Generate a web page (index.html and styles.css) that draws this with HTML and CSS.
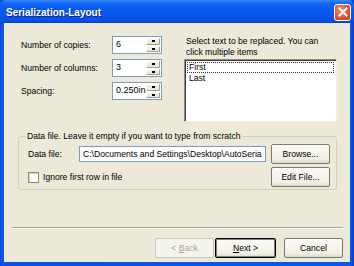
FILE: index.html
```html
<!DOCTYPE html>
<html>
<head>
	<title>Serialization-Layout</title>
	<link rel="stylesheet" href="styles.css">
</head>
<body>
	<div class="window">
		<!-- title bar -->
		<div class="titlebar">
			<span class="title">Serialization-Layout</span>
			<span class="close">
				<svg width="10" height="10" viewBox="0 0 10 10"><path d="M1.5 1.5 L8.5 8.5 M8.5 1.5 L1.5 8.5" stroke="#fff" stroke-width="2" stroke-linecap="square"/></svg>
			</span>
		</div>

		<div class="client">
			<div class="top">
				<div class="fields">
					<div class="row">
						<span class="label">Number of copies:</span>
						<div class="spin"><span class="val">6</span><span class="arrows"><i class="up"></i><i class="down"></i></span></div>
					</div>
					<div class="row">
						<span class="label">Number of columns:</span>
						<div class="spin"><span class="val">3</span><span class="arrows"><i class="up"></i><i class="down"></i></span></div>
					</div>
					<div class="row">
						<span class="label">Spacing:</span>
						<div class="spin"><span class="val">0.250in</span><span class="arrows"><i class="up"></i><i class="down"></i></span></div>
					</div>
				</div>
				<div class="pick">
					<p class="hint">Select text to be replaced. You can click multiple items</p>
					<div class="list">
						<div class="item focus">First</div>
						<div class="item">Last</div>
					</div>
				</div>
			</div>

			<!-- data file group -->
			<fieldset class="group">
				<legend>Data file. Leave it empty if you want to type from scratch</legend>
				<div class="grow">
					<span class="flabel">Data file:</span>
					<div class="path">C:\Documents and Settings\Desktop\AutoSeria</div>
					<button class="btn" type="button">Browse...</button>
				</div>
				<div class="grow">
					<span class="check"></span>
					<span class="clabel">Ignore first row in file</span>
					<button class="btn" type="button">Edit File...</button>
				</div>
			</fieldset>

			<div class="sep"></div>

			<div class="buttons">
				<button class="btn off" type="button">&lt; <u>B</u>ack</button>
				<button class="btn def" type="button"><u>N</u>ext &gt;</button>
				<button class="btn cancel" type="button">Cancel</button>
			</div>
		</div>
	</div>
</body>
</html>
```

FILE: styles.css
```css
*{
	margin: 0;
	padding: 0;
	box-sizing: border-box;
}
body{
	width: 354px;
	height: 266px;
	overflow: hidden;
	font-family: "Liberation Sans", Arial, sans-serif;
	font-size: 8.6px;
	color: #000;
	background: #0842d0;
}
.window{
	width: 354px;
	height: 266px;
	display: flex;
	flex-direction: column;
	background: linear-gradient(90deg, #0a48d8, #0a58f0 2px, #0a50e0 4px, #0a58f0 350px, #0a3cc4);
	padding: 0 4px 4px 4px;
}

/* title bar */
.titlebar{
	height: 23px;
	margin: 0 -4px;
	padding: 0 3px 0 6px;
	display: flex;
	align-items: center;
	justify-content: space-between;
	background: linear-gradient(#3a8cf8 0, #1468f4 3px, #0a5cf0 8px, #0656ea 16px, #0a50e0 21px, #0a3cc0 23px);
	border-radius: 6px 6px 0 0;
}
.title{
	color: #fff;
	font-weight: bold;
	font-size: 10px;
	text-shadow: 1px 1px 0 #0a1e8a;
	padding-top: 1px;
}
.close{
	width: 17px;
	height: 17px;
	margin-top: 1px;
	border: 1px solid #fff;
	border-radius: 3px;
	background: radial-gradient(circle at 40% 35%, #f29272, #e05030 60%, #c83c1c);
	display: flex;
	align-items: center;
	justify-content: center;
}

.client{
	flex: 1;
	background: #ece9d8;
	border-left: 1px solid #f4f2e6;
	padding-top: 13px;
	display: flex;
	flex-direction: column;
}

/* top section */
.top{
	display: flex;
	padding-left: 16px;
	height: 86px;
}
.fields{
	display: flex;
	flex-direction: column;
	gap: 5px;
	width: 141px;
}
.row{
	display: flex;
	align-items: center;
	height: 18px;
}
.label{
	width: 91px;
}
.spin{
	width: 50px;
	height: 18px;
	display: flex;
	background: #fff;
	border: 1px solid #7f9db9;
	padding: 1px;
}
.val{
	flex: 1;
	padding: 1px 0 0 2px;
	font-size: 9px;
	white-space: nowrap;
}
.arrows{
	width: 14px;
	display: flex;
	flex-direction: column;
	gap: 1px;
}
.arrows i{
	flex: 1;
	background: #ece9d8 linear-gradient(#f4f3ee, #e6e3d2);
	border: 1px solid;
	border-color: #fff #a0a0a0 #a0a0a0 #fff;
	display: flex;
	align-items: center;
	justify-content: center;
}
.arrows i::after{
	content: "";
	width: 3px;
	height: 2px;
	background: #000;
}

.pick{
	margin-left: 22px;
	width: 153px;
}
.hint{
	padding-left: 2px;
	line-height: 11px;
	height: 23px;
}
.list{
	height: 63px;
	background: #fff;
	border: 1px solid;
	border-color: #8a8a80 #f0efe8 #f0efe8 #8a8a80;
	padding: 2px 2px;
	box-shadow: inset 1px 1px 0 #404040;
}
.item{
	height: 11px;
	line-height: 11px;
	padding-left: 2px;
}
.focus{
	outline: 1px dotted #333;
	outline-offset: -1px;
}

/* group */
.group{
	margin: 8px 0 0 13px;
	width: 319px;
	height: 60px;
	border: 1px solid #d0d0bf;
	border-radius: 3px;
	padding: 2px 6px 0 9px;
}
.group legend{
	margin-left: -2px;
	padding: 0 1px;
	color: #000;
	line-height: 12px;
}
.grow{
	display: flex;
	align-items: center;
	height: 20px;
	margin-bottom: 3px;
}
.flabel{
	width: 51px;
}
.path{
	width: 187px;
	height: 16px;
	background: #fff;
	border: 1px solid #7f9db9;
	padding: 2px 0 0 3px;
	white-space: nowrap;
	overflow: hidden;
}
.check{
	width: 11px;
	height: 11px;
	background: #fff;
	border: 1px solid #8a8a80;
	box-shadow: inset 1px 1px 0 #d8d6c8;
	margin-right: 4px;
}
.clabel{
	flex: 1;
}
.btn{
	width: 59px;
	height: 20px;
	font-family: inherit;
	font-size: 8.6px;
	color: #000;
	background: linear-gradient(#fbfbf8, #f1efe6 80%, #dcd8c6);
	border: 1px solid #7a786c;
	border-radius: 2px;
	margin-left: auto;
}
.grow .btn{
	margin-left: 5px;
}
.grow .clabel + .btn{
	margin-left: 0;
}

.sep{
	margin: 37px 7px 0 7px;
	height: 2px;
	border-top: 1px solid #aca899;
	border-bottom: 1px solid #fff;
}
.buttons{
	display: flex;
	padding: 9px 7px 0 0;
	justify-content: flex-end;
}
.buttons .btn{
	margin-left: 0;
}
.off{
	color: #aca899;
	border-color: #c9c7ba;
	background: #f4f3ee;
}
.def{
	margin-left: 1px !important;
	width: 61px;
	border: 1px solid #000;
	box-shadow: inset 0 0 0 1px #808080;
}
.cancel{
	margin-left: 8px !important;
}
```
